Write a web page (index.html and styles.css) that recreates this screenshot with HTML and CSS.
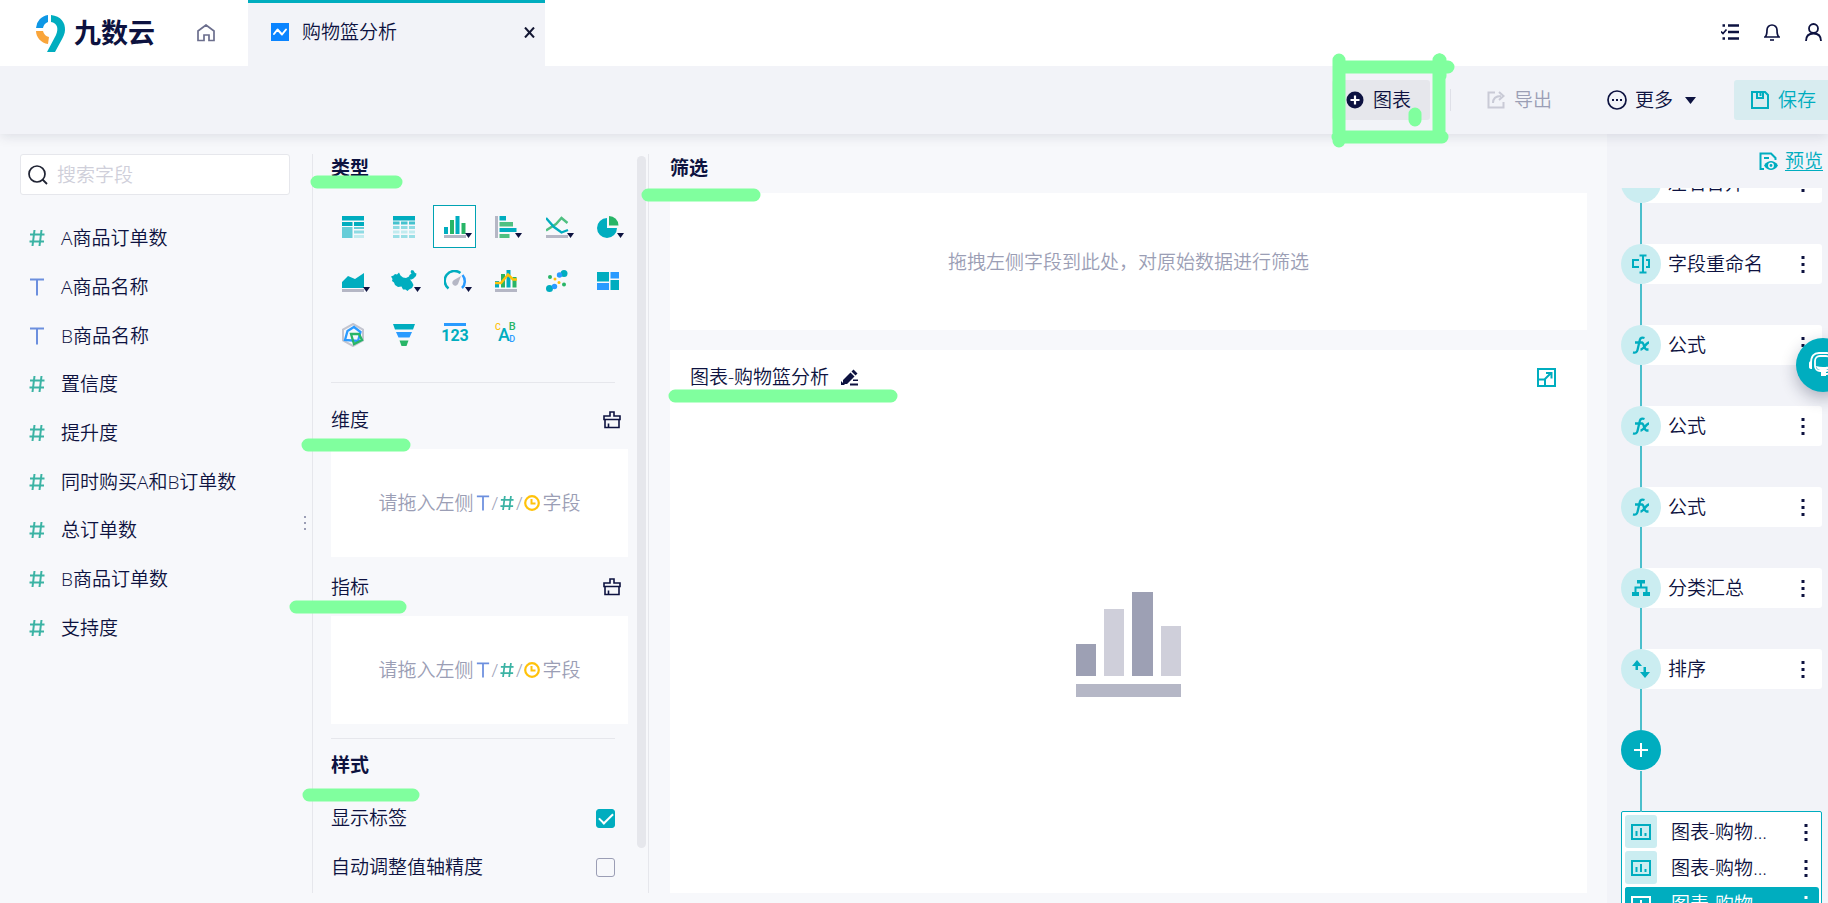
FILE: index.html
```html
<!DOCTYPE html>
<html lang="zh-CN">
<head>
<meta charset="utf-8">
<title>九数云 - 购物篮分析</title>
<link rel="stylesheet" href="styles.css">
</head>
<body>
<svg class="defs" width="0" height="0" aria-hidden="true">
  <symbol id="num" viewBox="0 0 16 18"><path d="M5.500 1 3.500 17M12.500 1 10.500 17M1 5.500H15.500M.5 12.500H15" fill="none" stroke="#3bb3a4" stroke-width="2"/></symbol>
  <symbol id="txt" viewBox="0 0 16 18"><path d="M1 1.500H15M8 1.500V17.500" fill="none" stroke="#6c8fde" stroke-width="2"/></symbol>
  <symbol id="clock" viewBox="0 0 16 16"><circle cx="8" cy="8" r="6.800" fill="none" stroke="#ffc20a" stroke-width="2.200"/><path d="M7.500 4V8.500H11.500" fill="none" stroke="#ffc20a" stroke-width="2"/></symbol>
  <symbol id="brush" viewBox="0 0 18 18"><path d="M7 5V1H11V5H17V8.500H1V5ZM2 8.500V16.500H16V8.500M5.500 16V12.500" fill="none" stroke="#0d1240" stroke-width="1.600"/></symbol>
  <symbol id="dots" viewBox="0 0 4 18"><path d="M.5 1h3v3h-3zM.5 8h3v3h-3zM.5 15h3v3h-3z" fill="currentColor"/></symbol>
  <symbol id="fx" viewBox="0 0 18 18"><path d="M12.500 2C10 1 8.300 2 7.800 4L5.500 14C5 16.200 3.500 17 1 16.300M3 6.500H10.500M10 6.500C12 6.500 12 13.500 14.500 13.500H16.500M17 6.500C14 6.500 12 13.500 8.500 13.500" fill="none" stroke="#00adbf" stroke-width="2.300"/></symbol>
  <symbol id="chart" viewBox="0 0 20 16"><rect x="1" y="1" width="18" height="14" fill="none" stroke="currentColor" stroke-width="2"/><path d="M5.500 12V7M10 12V4M14.500 12V9" stroke="currentColor" stroke-width="2"/></symbol>
  <symbol id="tri" viewBox="0 0 8 5"><path d="M0 0H8L4 5Z" fill="#0d1240"/></symbol>
</svg>

<header class="topbar">
  <a class="logo" href="#">
    <svg width="30" height="37" viewBox="0 0 30 37"><path d="M12 0A14 14 0 0 0 0 13H7A8 8 0 0 1 12 7Z" fill="#0e97e5"/><path d="M0 16H7A8 8 0 0 0 13 22L12 29C5 28 0 22 0 16Z" fill="#f9a53b"/><path d="M15 0C25 1 29.500 8 29 15C29 19 27 22 25 26L19 37H11L20 20C23 13 21 8 15 7Z" fill="#00adbf"/></svg>
    <span>九数云</span>
  </a>
  <a class="home" href="#" aria-label="首页"><svg width="18" height="18" viewBox="0 0 18 18"><path d="M1 7 9 1 17 7V16.500H12V11H7V16.500H1Z" fill="none" stroke="#6b6e8d" stroke-width="1.700"/></svg></a>
  <div class="tab">
    <svg width="18" height="18" viewBox="0 0 18 18"><rect width="18" height="18" fill="#0a84ff"/><path d="M3 11 6.500 6.500 11 11.500 15 6.500" fill="none" stroke="#fff" stroke-width="2" stroke-linecap="round" stroke-linejoin="round"/></svg>
    <span class="tab-title">购物篮分析</span>
    <button class="plain" aria-label="关闭"><svg width="11" height="11" viewBox="0 0 11 11"><path d="M1 .5 10 10.500M10 .5 1 10.500" stroke="#141733" stroke-width="2"/></svg></button>
  </div>
  <nav class="tools">
    <button class="plain" aria-label="任务"><svg width="18" height="18" viewBox="0 0 18 18"><path d="M7 2.500H18M7 9H18M7 15.500H18M1.500 2.500H4M1.500 15.500H4" stroke="#0d1240" stroke-width="2.400"/><path d="M0 8.500 2 10.500 5.500 6.500" fill="none" stroke="#0d1240" stroke-width="1.700"/></svg></button>
    <button class="plain" aria-label="通知"><svg width="16" height="18" viewBox="0 0 16 18"><path d="M1 14H15C13 12.500 13 10 13 7A5 5 0 0 0 3 7C3 10 3 12.500 1 14Z" fill="none" stroke="#0d1240" stroke-width="1.700"/><path d="M6 17H10" stroke="#0d1240" stroke-width="1.600"/></svg></button>
    <button class="plain" aria-label="用户"><svg width="17" height="18" viewBox="0 0 17 18"><circle cx="8.500" cy="5.500" r="4.500" fill="none" stroke="#0d1240" stroke-width="1.800"/><path d="M1 18C1 13 4 10.500 8.500 10.500S16 13 16 18" fill="none" stroke="#0d1240" stroke-width="1.800"/></svg></button>
  </nav>
</header>

<div class="actions">
  <button class="act add"><svg width="18" height="18" viewBox="0 0 18 18"><circle cx="9" cy="9" r="8.500" fill="#0d1240"/><path d="M9 4.500V13.500M4.500 9H13.500" stroke="#fff" stroke-width="2.200"/></svg>图表</button>
  <span class="split"></span>
  <button class="act export"><svg width="18" height="18" viewBox="0 0 18 18"><path d="M8 1.500H1.500V16.500H16.500V11M6 12C6 7.500 9 5 14 5M12 1 16.500 5 12 9" fill="none" stroke="#c9cad6" stroke-width="2"/></svg>导出</button>
  <button class="act more"><svg width="20" height="20" viewBox="0 0 20 20"><circle cx="10" cy="10" r="9" fill="none" stroke="#0d1240" stroke-width="1.700"/><path d="M5 9h2v2H5zM9 9h2v2H9zM13 9h2v2h-2z" fill="#0d1240"/></svg>更多<svg class="caret" width="11" height="7"><use href="#tri"/></svg></button>
  <button class="act save"><svg width="18" height="18" viewBox="0 0 18 18"><path d="M1 1H14L17 4V17H1ZM6 1V7H12V1M9.500 2V5" fill="none" stroke="#00adbf" stroke-width="2"/></svg>保存</button>
</div>

<main class="work">
  <aside class="fields">
    <label class="search"><svg width="20" height="20" viewBox="0 0 20 20"><circle cx="9" cy="9" r="8" fill="none" stroke="#1f2333" stroke-width="1.700"/><path d="M14.500 14.500 19 19" stroke="#1f2333" stroke-width="1.800"/></svg><input type="text" placeholder="搜索字段" aria-label="搜索字段"></label>
    <ul class="field-list">
      <li><svg width="16" height="18"><use href="#num"/></svg>A商品订单数</li>
      <li><svg width="16" height="18"><use href="#txt"/></svg>A商品名称</li>
      <li><svg width="16" height="18"><use href="#txt"/></svg>B商品名称</li>
      <li><svg width="16" height="18"><use href="#num"/></svg>置信度</li>
      <li><svg width="16" height="18"><use href="#num"/></svg>提升度</li>
      <li><svg width="16" height="18"><use href="#num"/></svg>同时购买A和B订单数</li>
      <li><svg width="16" height="18"><use href="#num"/></svg>总订单数</li>
      <li><svg width="16" height="18"><use href="#num"/></svg>B商品订单数</li>
      <li><svg width="16" height="18"><use href="#num"/></svg>支持度</li>
    </ul>
    <svg class="grip" width="4" height="16" viewBox="0 0 4 16"><path d="M1 1h2v2H1zM1 7h2v2H1zM1 13h2v2H1z" fill="#9b9eb5"/></svg>
  </aside>

  <section class="config">
    <div class="config-body">
      <h2>类型</h2>
      <div class="types">
        <button aria-label="分组表"><svg width="22" height="22" viewBox="0 0 22 22"><path d="M0 0H22V4.500H0ZM0 6H10.500V10H0ZM12 6H22V10H12Z" fill="#00adbf"/><path d="M0 11H10.500V22H0ZM12 11H22V13H12Z" fill="#66cdd8"/><path d="M12 14.500H22V17.500H12Z" fill="#8edbe3"/><path d="M12 19H22V22H12Z" fill="#c2ebef"/></svg></button>
        <button aria-label="明细表"><svg width="22" height="22" viewBox="0 0 22 22"><path d="M0 0H22V4.500H0Z" fill="#00adbf"/><path d="M0 5.500H6.500V8.500H0ZM8 5.500H14.500V8.500H8ZM16 5.500H22V8.500H16Z" fill="#45c2ce"/><path d="M0 10H6.500V13H0ZM8 10H14.500V13H8ZM16 10H22V13H16Z" fill="#8edbe3"/><path d="M0 14.500H6.500V17.500H0ZM8 14.500H14.500V17.500H8ZM16 14.500H22V17.500H16Z" fill="#c2ebef"/><path d="M0 19H6.500V22H0ZM8 19H14.500V22H8ZM16 19H22V22H16Z" fill="#9adfe6"/></svg></button>
        <button class="on" aria-label="柱形图"><svg width="28" height="22" viewBox="0 0 28 22"><path d="M0 11H4V18H0ZM11.500 0H15.500V18H11.500Z" fill="#00adbf"/><path d="M6 4H10V18H6ZM17.500 7H21.500V18H17.500Z" fill="#28b567"/><path d="M0 19H22V22H0Z" fill="#b5b7c5"/><path d="M21 17H28L24.500 22Z" fill="#0d1240"/></svg></button>
        <button aria-label="条形图"><svg width="28" height="22" viewBox="0 0 28 22"><path d="M0 0H3V22H0Z" fill="#b5b7c5"/><path d="M4.500 0H11V4.500H4.500ZM4.500 12H21.500V16H4.500Z" fill="#00adbf"/><path d="M4.500 6H18V10.500H4.500ZM4.500 18H14.500V22H4.500Z" fill="#4fc081"/><path d="M20 17H27L23.500 22Z" fill="#0d1240"/></svg></button>
        <button aria-label="折线图"><svg width="28" height="22" viewBox="0 0 28 22"><path d="M0 14.500 10 8 15.500 2 21.500 7" fill="none" stroke="#4fc081" stroke-width="2.400"/><path d="M0 2 8 11 15.500 16.500 22 14" fill="none" stroke="#00adbf" stroke-width="2.400"/><path d="M0 19H22V22H0Z" fill="#b5b7c5"/><path d="M21 17H28L24.500 22Z" fill="#0d1240"/></svg></button>
        <button aria-label="饼图"><svg width="28" height="22" viewBox="0 0 28 22"><path d="M10 2A10 10 0 1 0 20 12H10Z" fill="#00adbf"/><path d="M12 0A9.500 9.500 0 0 1 21.500 9.500H12Z" fill="#28b567"/><path d="M20 17H27L23.500 22Z" fill="#0d1240"/></svg></button>
        <button aria-label="面积图"><svg width="28" height="22" viewBox="0 0 28 22"><path d="M0 18V12L6 6 13 9 22 3V18Z" fill="#00adbf"/><path d="M0 19H22V22H0Z" fill="#b5b7c5"/><path d="M21 17H28L24.500 22Z" fill="#0d1240"/></svg></button>
        <button class="wide" aria-label="地图"><svg width="30" height="22" viewBox="0 0 30 22"><path d="M0 6.500 2.500 5.500 4 4 6 4.500 8 2.500 9.500 5.500 12 7.500 15 8 18 6.500 18.500 5 20.500 3.500 19.500 2 20.500 0 22.500.5 24 3 25.500 3.500 25 6 22.500 8.500 20.500 9.500 19 9.500 21 12 22.500 15 21 18 18 19.500 16.500 21 14.500 19.500 12 19.500 10.500 16.500 7 17 4 15 3 12.500 1 11 1.500 9Z" fill="#00adbf"/><path d="M23 17H30L26.500 22Z" fill="#0d1240"/></svg></button>
        <button aria-label="仪表盘"><svg width="28" height="22" viewBox="0 0 28 22"><path d="M4.500 18.500A9.500 9.500 0 1 1 16.500 3" fill="none" stroke="#00adbf" stroke-width="2.500"/><path d="M18.500 5A9.500 9.500 0 0 1 18 18" fill="none" stroke="#2a9bff" stroke-width="2.500"/><path d="M17 6 14 14A3 3 0 1 1 10 10Z" fill="#b5b7c5"/><path d="M21 17H28L24.500 22Z" fill="#0d1240"/></svg></button>
        <button aria-label="组合图"><svg width="22" height="22" viewBox="0 0 22 22"><path d="M0 11H4V17.500H0ZM11.500 0H15.500V17.500H11.500Z" fill="#00adbf"/><path d="M6 4H10V17.500H6ZM17.500 7H21.500V17.500H17.500Z" fill="#28b567"/><path d="M0 13H6L13 4.500 18 9.500H22" fill="none" stroke="#ffc20a" stroke-width="2.500"/><path d="M0 19H22V22H0Z" fill="#b5b7c5"/></svg></button>
        <button aria-label="散点图"><svg width="22" height="22" viewBox="0 0 22 22"><circle cx="18" cy="3.500" r="3.500" fill="#00adbf"/><circle cx="3.500" cy="18.500" r="3.500" fill="#00adbf"/><circle cx="13.500" cy="5" r="2.700" fill="#2a9bff"/><circle cx="8.500" cy="16.500" r="2.700" fill="#2a9bff"/><circle cx="4" cy="7" r="2" fill="#28b567"/><circle cx="18" cy="14.500" r="2" fill="#28b567"/><circle cx="9" cy="9" r="1.500" fill="#ffc20a"/><circle cx="13" cy="12.500" r="1.500" fill="#ffc20a"/></svg></button>
        <button aria-label="矩形树图"><svg width="22" height="18" viewBox="0 0 22 18"><path d="M0 0H12V9.500H0ZM13.500 8H22V18H13.500Z" fill="#00adbf"/><path d="M13.500 0H22V6.500H13.500ZM0 11H12V18H0Z" fill="#2a9bff"/></svg></button>
        <button aria-label="雷达图"><svg width="22" height="24" viewBox="0 0 22 24"><path d="M11 1 21 6.500V17.500L11 23 1 17.500V6.500Z" fill="none" stroke="#c3c5d0" stroke-width="2"/><path d="M12 4 18.500 9 16 18 3 17 5.500 8Z" fill="none" stroke="#2a9bff" stroke-width="2.300"/><path d="M9 11H17L20 17 12 21Z" fill="none" stroke="#28b567" stroke-width="2.300"/></svg></button>
        <button aria-label="漏斗图"><svg width="22" height="22" viewBox="0 0 22 22"><path d="M0 0H22L20 5.500H2Z" fill="#00adbf"/><path d="M3 8H19L16.500 13.500H5.500Z" fill="#2a9bff"/><path d="M6.500 16.500H15.500L13.500 22H8.500Z" fill="#28b567"/></svg></button>
        <button aria-label="指标卡"><span class="kpi">123</span></button>
        <button aria-label="词云"><span class="cloud"><i>C</i><b>A</b><span><em>B</em><u>D</u></span></span></button>
      </div>
      <hr class="rule first">
      <div class="row drop-head"><h3>维度</h3><button class="plain" aria-label="清空维度"><svg width="18" height="18"><use href="#brush"/></svg></button></div>
      <div class="drop">请拖入左侧<svg width="14" height="16"><use href="#txt"/></svg><span>/</span><svg width="14" height="16"><use href="#num"/></svg><span>/</span><svg width="16" height="16"><use href="#clock"/></svg>字段</div>
      <div class="row drop-head second"><h3>指标</h3><button class="plain" aria-label="清空指标"><svg width="18" height="18"><use href="#brush"/></svg></button></div>
      <div class="drop">请拖入左侧<svg width="14" height="16"><use href="#txt"/></svg><span>/</span><svg width="14" height="16"><use href="#num"/></svg><span>/</span><svg width="16" height="16"><use href="#clock"/></svg>字段</div>
      <hr class="rule">
      <h2 class="style-title">样式</h2>
      <label class="row opt">显示标签<input type="checkbox" checked></label>
      <label class="row opt">自动调整值轴精度<input type="checkbox"></label>
    </div>
    <div class="scroll"></div>
  </section>

  <section class="canvas">
    <h2>筛选</h2>
    <div class="filter">拖拽左侧字段到此处，对原始数据进行筛选</div>
    <div class="card">
      <div class="card-head">
        <span>图表-购物篮分析</span>
        <button class="plain" aria-label="重命名"><svg width="17" height="17" viewBox="0 0 17 17"><path d="M2 11 9.500 3.500 13.500 7.500 6 15H2ZM10.500 2.500 12.500.5 16.500 4.500 14.500 6.500Z" fill="#0d1240"/><path d="M0 16H4L0 12ZM9 14.500H17V16.500H9ZM12 10.500H17V12H12Z" fill="#0d1240"/></svg></button>
        <button class="plain expand" aria-label="放大"><svg width="19" height="19" viewBox="0 0 19 19"><path d="M1 1H18V18H1ZM1 11.500H8V18M7 12 14 5M9 5H14.500V10.500" fill="none" stroke="#00adbf" stroke-width="2"/></svg></button>
      </div>
      <div class="empty"><svg width="105" height="105" viewBox="0 0 105 105"><path d="M0 52H20V84H0ZM56 0H77V84H56Z" fill="#9da0b4"/><path d="M28 17H48V84H28ZM85 34H105V84H85Z" fill="#cfcfda"/><path d="M0 92H105V105H0Z" fill="#b5b7c6"/></svg></div>
    </div>
  </section>

  <aside class="flow">
    <div class="preview"><svg width="19" height="19" viewBox="0 0 19 19"><path d="M5 17H1.500V1.500H12L16.500 6V8M5 6H10" fill="none" stroke="#00adbf" stroke-width="2"/><path d="M5 13.500C7 10 10 9 12 9S17 10 19 13.500C17 17 14 18 12 18S7 17 5 13.500Z" fill="#00adbf"/><circle cx="12" cy="13.500" r="2.200" fill="none" stroke="#f2f3f8" stroke-width="1.500"/></svg><a href="#">预览</a></div>
    <div class="steps">
      <ol class="nodes">
        <li><span class="dot"><svg width="12" height="18" viewBox="0 0 12 18"><path d="M1 9H5V14H1ZM7 9H11V14H7Z" fill="#00adbf"/></svg></span><span class="name">左右合并</span><button class="plain" aria-label="菜单"><svg width="4" height="18"><use href="#dots"/></svg></button></li>
        <li><span class="dot"><svg width="20" height="20" viewBox="0 0 20 20"><path d="M8 6H2V13H8M15 6H18V13H15M12 1.500V18.500M8.500 1.500H15.500M8.500 18.500H15.500" fill="none" stroke="#00adbf" stroke-width="2"/></svg></span><span class="name">字段重命名</span><button class="plain" aria-label="菜单"><svg width="4" height="18"><use href="#dots"/></svg></button></li>
        <li><span class="dot"><svg width="18" height="18"><use href="#fx"/></svg></span><span class="name">公式</span><button class="plain" aria-label="菜单"><svg width="4" height="18"><use href="#dots"/></svg></button></li>
        <li><span class="dot"><svg width="18" height="18"><use href="#fx"/></svg></span><span class="name">公式</span><button class="plain" aria-label="菜单"><svg width="4" height="18"><use href="#dots"/></svg></button></li>
        <li><span class="dot"><svg width="18" height="18"><use href="#fx"/></svg></span><span class="name">公式</span><button class="plain" aria-label="菜单"><svg width="4" height="18"><use href="#dots"/></svg></button></li>
        <li><span class="dot"><svg width="18" height="16" viewBox="0 0 18 16"><path d="M5 0H13V3.500H5ZM0 12H7V16H0ZM11 12H18V16H11Z" fill="#00adbf"/><path d="M9 3V7M3.500 13V7.500H14.500V13" fill="none" stroke="#00adbf" stroke-width="2"/></svg></span><span class="name">分类汇总</span><button class="plain" aria-label="菜单"><svg width="4" height="18"><use href="#dots"/></svg></button></li>
        <li><span class="dot"><svg width="18" height="18" viewBox="0 0 18 18"><path d="M5 0 10 6H6V10H3.500V6H0ZM13 18 8 12H11.500V7H14V12H18Z" fill="#00adbf"/></svg></span><span class="name">排序</span><button class="plain" aria-label="菜单"><svg width="4" height="18"><use href="#dots"/></svg></button></li>
      </ol>
      <button class="plus" aria-label="添加步骤"><svg width="14" height="14" viewBox="0 0 14 14"><path d="M7 0V14M0 7H14" stroke="#fff" stroke-width="2"/></svg></button>
      <ul class="charts">
        <li><span class="thumb"><svg width="20" height="16"><use href="#chart"/></svg></span><span class="name">图表-购物篮分析</span><svg width="4" height="18"><use href="#dots"/></svg></li>
        <li><span class="thumb"><svg width="20" height="16"><use href="#chart"/></svg></span><span class="name">图表-购物篮分析</span><svg width="4" height="18"><use href="#dots"/></svg></li>
        <li class="current"><span class="thumb"><svg width="20" height="16"><use href="#chart"/></svg></span><span class="name">图表-购物篮分析</span><svg width="4" height="18"><use href="#dots"/></svg></li>
      </ul>
    </div>
  </aside>
</main>

<button class="help" aria-label="客服"><svg width="28" height="26" viewBox="0 0 28 26"><path d="M2 11C2 4 5 1 10 1H18C23 1 26 4 26 11" fill="none" stroke="#fff" stroke-width="1.800"/><path d="M0 11Q0 9 3 9V17Q0 17 0 15ZM28 11Q28 9 25 9V17Q28 17 28 15Z" fill="#fff"/><rect x="6" y="4" width="16" height="15" rx="5" fill="none" stroke="#fff" stroke-width="1.800"/><path d="M7 14Q14 16 21 14C20 20 8 20 7 14ZM12 20H17V24H12Z" fill="#fff"/><path d="M26 16C25 20 21 22 16 22" fill="none" stroke="#fff" stroke-width="1.800"/></svg></button>

<svg class="marks" aria-hidden="true"><path d="M1339 60V141M1439 60V137M1440 76V60M1339 67H1448M1338 137H1442M1415 114V120M317 182H396M308 445H404M296 607H400M309 795H413M648 195H754M675 396H891"/></svg>
</body>
</html>
```
FILE: styles.css
```css
* { box-sizing: border-box; }
body {
  margin: 0;
  height: 100vh;
  display: flex;
  flex-direction: column;
  position: relative;
  overflow: hidden;
  background: #f7f8fb;
  color: #0d1240;
  font: 350 19px/28px "Open Sans", "Noto Sans CJK SC", sans-serif;
}
svg { display: block; flex: none; }
.defs { position: absolute; }
h2, h3, ul, ol { margin: 0; padding: 0; list-style: none; }
h2 { font-size: 19px; font-weight: 700; }
h3 { font-size: 19px; font-weight: 350; }
button { font: inherit; color: inherit; border: 0; padding: 0; background: none; }
.plain { display: flex; }

.topbar { position: relative; z-index: 2; display: flex; align-items: center; height: 66px; flex: none; background: #fff; }
.logo { display: flex; align-items: center; gap: 8px; margin-left: 36px; color: #0d1240; text-decoration: none; font-size: 27px; font-weight: 700; }
.home { margin-left: 42px; }
.tab { display: flex; align-items: center; align-self: stretch; width: 297px; margin-left: 33px; padding: 0 10px 5px 23px; gap: 13px; background: #f2f3f8; border-top: 3px solid #00adbf; }
.tab-title { flex: 1; }
.tools { display: flex; gap: 25px; margin-left: auto; padding: 0 6px 2px 0; }

.actions { position: relative; z-index: 1; display: flex; align-items: center; justify-content: flex-end; height: 68px; flex: none; background: #f2f3f8; box-shadow: 0 2px 12px rgba(20, 25, 60, .12); }
.act { display: flex; align-items: center; gap: 9px; height: 40px; }
.add { padding: 0 19px 0 14px; background: #e6e7ec; border-radius: 3px; }
.split { width: 1px; height: 22px; margin: 0 36px 0 20px; background: #dfe0e8; }
.export { color: #9b9eb5; margin-right: 55px; }
.more { gap: 8px; margin-right: 38px; }
.caret { margin-left: 4px; }
.save { padding: 0 12px 0 17px; color: #00adbf; background: #d8ecf0; border-radius: 3px 0 0 3px; }

.work { display: flex; flex: 1; min-height: 0; }
.fields { position: relative; width: 313px; margin: 20px 0 10px; padding: 0 22px 0 20px; border-right: 1px solid #e6e7ec; }
.search { display: flex; align-items: center; gap: 9px; height: 41px; padding-left: 7px; background: #fff; border: 1px solid #e6e7ec; border-radius: 3px; }
.search input { flex: 1; min-width: 0; border: 0; outline: 0; padding: 0; background: none; font: inherit; }
.search input::placeholder { color: #cfcfda; }
.field-list { display: grid; grid-auto-rows: 1fr; height: 438px; margin-top: 19px; }
.field-list li { display: flex; align-items: center; gap: 16px; padding-left: 9px; }
.grip { position: absolute; right: 5px; top: 361px; }

.config { display: flex; justify-content: space-between; width: 336px; margin: 20px 0 10px; padding: 0 2px 0 18px; border-right: 1px solid #e6e7ec; }
.config-body { width: 301px; overflow: hidden; }
.scroll { width: 9px; margin: 2px 0 45px; background: #e6e7ec; border-radius: 5px; }
.types { display: grid; grid-template-columns: repeat(6, 43px); gap: 11px 8px; margin-top: 23px; }
.types button { display: flex; align-items: center; height: 43px; padding-left: 10px; border: 1px solid transparent; }
.types .on { background: #fff; border-color: #00a3b3; }
.types .wide { padding-left: 8px; }
.kpi { display: flex; justify-content: center; width: 22px; border-top: 3px solid #2a9bff; color: #00adbf; font: 700 16px/20px "Liberation Sans Narrow", Roboto, sans-serif; }
.cloud { display: flex; color: #00adbf; font: 500 11px/12px Roboto, sans-serif; }
.cloud i { color: #ffc20a; font-style: normal; font-size: 9px; }
.cloud b { font-size: 18px; line-height: 28px; font-weight: 500; margin-left: -3px; }
.cloud span { display: flex; flex-direction: column; margin-left: -1px; }
.cloud em { color: #28b567; font-style: normal; }
.cloud u { color: #2a9bff; text-decoration: none; font-size: 9px; }
.rule { width: 284px; height: 1px; margin: 14px 0 12px; border: 0; background: #e6e7ec; }
.rule.first { margin: 26px 0 23px; }
.row { display: flex; align-items: center; justify-content: space-between; }
.drop-head { width: 290px; margin-bottom: 15px; }
.second { margin-top: 16px; }
.drop { display: flex; align-items: center; justify-content: center; gap: 2px; width: 297px; height: 108px; background: #fff; color: #9b9eb5; }
.opt { width: 284px; margin-top: 21px; }
.style-title + .opt { margin-top: 25px; }
.opt input { appearance: none; width: 19px; height: 19px; margin: 0; border: 1px solid #9b9eb5; border-radius: 3px; }
.opt input:checked { display: grid; place-items: center; background: #00adbf; border-color: #00adbf; }
.opt input:checked::after { content: ""; width: 12px; height: 6px; margin-bottom: 3px; border: solid #fff; border-width: 0 0 2px 2px; transform: rotate(-45deg); }

.canvas { display: flex; flex-direction: column; flex: 1; min-width: 0; padding: 20px 20px 10px 21px; }
.filter { display: flex; align-items: center; justify-content: center; height: 137px; flex: none; margin: 11px 0 20px; background: #fff; color: #9b9eb5; }
.card { display: flex; flex-direction: column; flex: 1; background: #fff; }
.card-head { display: flex; align-items: center; gap: 12px; padding: 13px 31px 0 20px; }
.expand { margin-left: auto; }
.empty { flex: 1; display: grid; place-items: center; padding-top: 5px; }

.flow { display: flex; flex-direction: column; width: 221px; flex: none; background: #f2f3f8; }
.preview { display: flex; align-items: center; justify-content: flex-end; gap: 7px; height: 54px; flex: none; padding: 0 5px 0 0; }
.preview a { color: #00adbf; text-underline-offset: 2px; }
.steps { flex: 1; min-height: 0; overflow: hidden; padding: 0 6px 0 14px; }
.nodes { display: grid; gap: 41px; margin-top: -25px; padding-bottom: 41px; background: linear-gradient(#4cbfcc, #4cbfcc) 19px 0 / 2px 100% no-repeat; }
.nodes li { display: flex; align-items: center; height: 40px; padding-right: 17px; background: linear-gradient(#fff, #fff) right / 181px 100% no-repeat; border-radius: 3px; }
.dot { display: grid; place-items: center; width: 40px; height: 40px; margin-right: 7px; border-radius: 50%; background: #cbedf1; }
.name { flex: 1; min-width: 0; white-space: nowrap; overflow: hidden; text-overflow: ellipsis; }
.plus { display: grid; place-items: center; width: 40px; height: 40px; border-radius: 50%; background: #00adbf; }
.charts { position: relative; display: grid; grid-template-columns: minmax(0, 1fr); gap: 3px; margin-top: 41px; padding: 3px 2px 3px 3px; background: #fff; border: 1px solid #00adbf; border-radius: 2px; }
.charts::before { content: ""; position: absolute; left: 18px; bottom: 100%; width: 2px; height: 41px; background: #4cbfcc; }
.charts li { display: flex; align-items: center; height: 33px; padding-right: 11px; border-radius: 3px; }
.charts .name { margin: 0 28px 0 14px; }
.thumb { display: grid; place-items: center; width: 32px; height: 33px; border-radius: 3px; background: #cbedf1; color: #00adbf; }
.charts .current, .current .thumb { background: #00adbf; color: #fff; }

.help { position: absolute; right: -22px; top: 338px; z-index: 2; display: grid; place-items: center; width: 54px; height: 54px; border-radius: 50%; background: #00adbf; box-shadow: 0 6px 16px rgba(20, 25, 60, .3); }
.marks { position: absolute; left: 0; top: 0; width: 100%; height: 100%; z-index: 3; pointer-events: none; fill: none; stroke: #80ff9e; stroke-width: 13; stroke-linecap: round; }
```
